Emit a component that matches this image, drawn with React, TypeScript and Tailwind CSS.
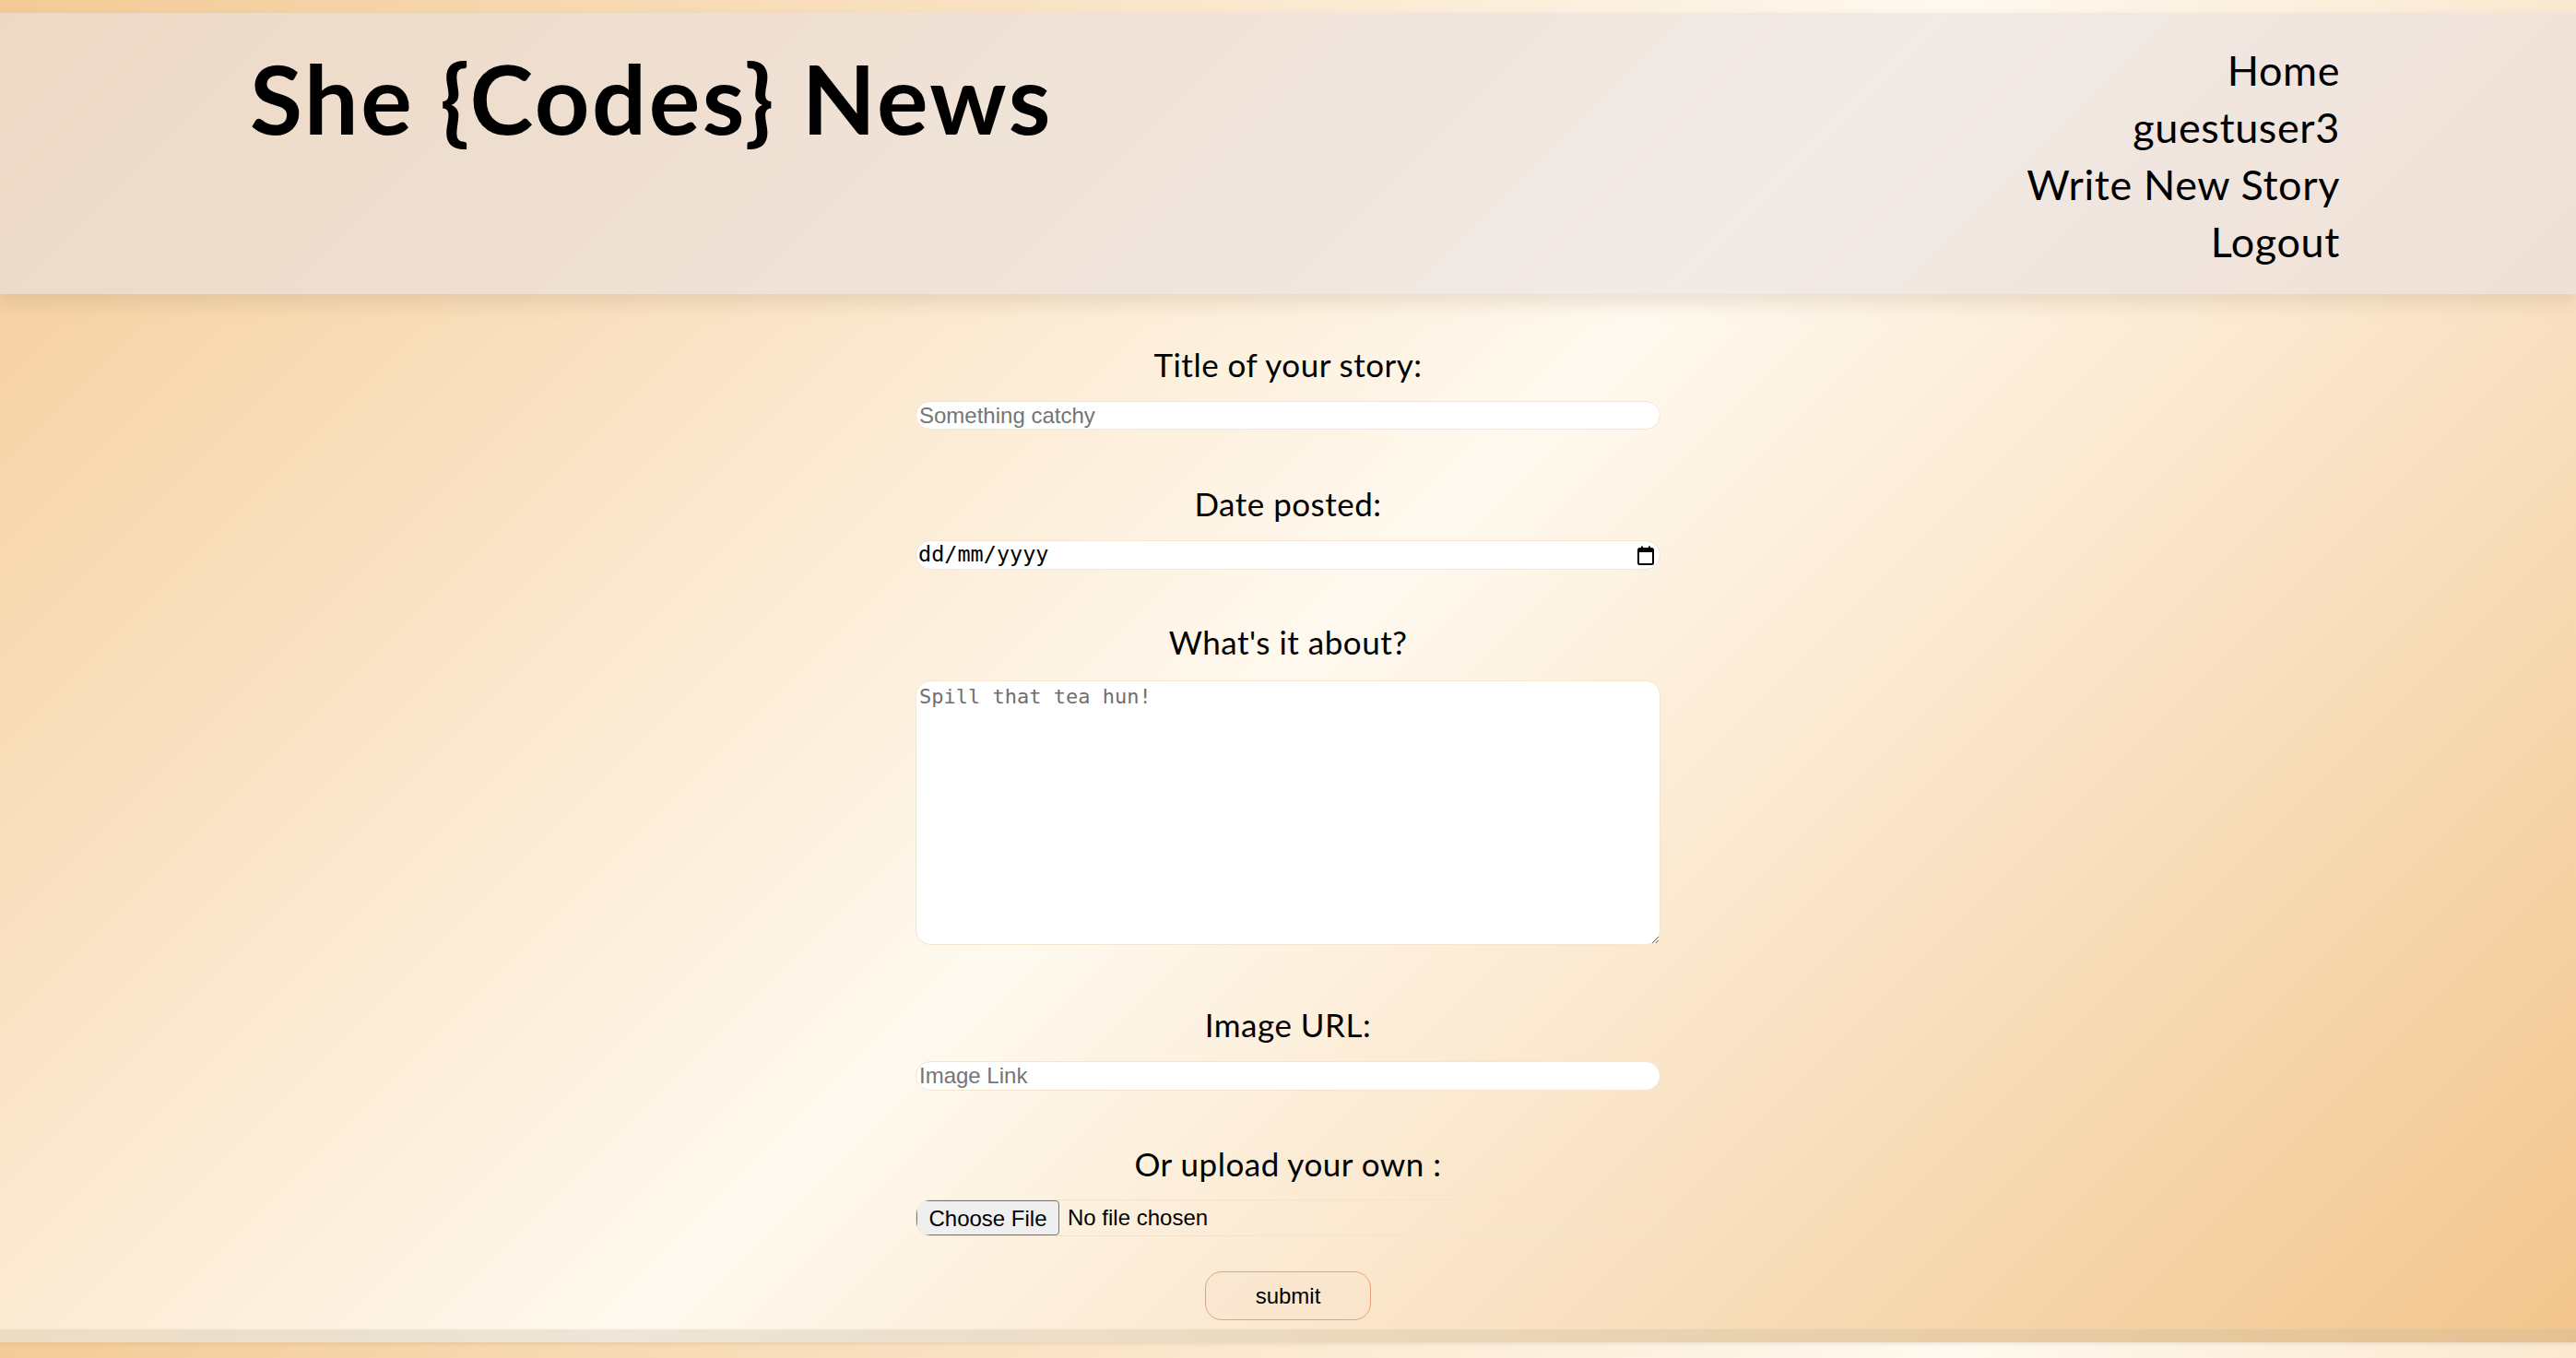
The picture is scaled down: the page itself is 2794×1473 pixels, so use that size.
import { useState } from 'react';

const raleway = { fontFamily: 'Lato, "Open Sans", sans-serif' };

function CalendarIcon() {
  return (
    <svg width="18" height="21" viewBox="0 0 18 21" aria-hidden="true">
      <rect x="1" y="3" width="16" height="17" rx="1.5" fill="none" stroke="#000" strokeWidth="2" />
      <rect x="1" y="3" width="16" height="4" fill="#000" />
      <rect x="4" y="0.5" width="2" height="4" fill="#000" />
      <rect x="12" y="0.5" width="2" height="4" fill="#000" />
    </svg>
  );
}

function FieldLabel({ children, htmlFor, className = '' }: { children: React.ReactNode; htmlFor: string; className?: string }) {
  return (
    <label
      htmlFor={htmlFor}
      className={`block text-center text-[35px] leading-[42px] tracking-[0.5px] text-black font-[Lato,sans-serif] ${className}`}
    >
      {children}
    </label>
  );
}

export default function App() {
  const [title, setTitle] = useState('');
  const [content, setContent] = useState('');
  const [image, setImage] = useState('');
  const [fileName, setFileName] = useState('');

  return (
    <div className="min-h-[1473px] overflow-hidden bg-[linear-gradient(135deg,#f4cb96_0%,#fff9ef_50%,#f2c58c_100%)] bg-[length:100%_1456px] bg-repeat-y pt-[14px]">
      <header
        style={raleway}
        className="flex h-[305px] items-start justify-between bg-[rgba(232,224,224,0.62)] pl-[271px] pr-[256px] shadow-[0_10px_18px_rgba(150,120,90,0.18)]"
      >
        <h1 className="mt-[40px] text-[104px] font-bold leading-none tracking-[2.6px] text-black">She {'{Codes}'} News</h1>
        <nav className="flex flex-col items-end pt-[31px] text-[45px] leading-[62px] tracking-[0.6px] text-black">
          <a href="#">Home</a>
          <a href="#">guestuser3</a>
          <a href="#">Write New Story</a>
          <a href="#">Logout</a>
        </nav>
      </header>

      <form className="flex flex-col items-center pt-[55px]" onSubmit={(e) => e.preventDefault()}>
        <FieldLabel htmlFor="title">Title of your story:</FieldLabel>
        <input
          id="title"
          value={title}
          onChange={(e) => setTitle(e.target.value)}
          placeholder="Something catchy"
          className="mt-[19px] h-[31px] w-[808px] rounded-[16px] border border-[#f6e4cf] bg-white px-[3px] font-['Liberation_Sans',Arial,sans-serif] text-[24px] text-black placeholder:text-[#757575] outline-none"
        />

        <FieldLabel htmlFor="date" className="mt-[59px]">Date posted:</FieldLabel>
        <div
          id="date"
          className="mt-[19px] flex h-[32px] w-[808px] items-center justify-between rounded-[16px] border border-[#f6e4cf] bg-white pl-[2px] pr-[6px]"
        >
          <span className="font-['DejaVu_Sans_Mono',monospace] text-[23.5px] leading-none text-black">dd/mm/yyyy</span>
          <CalendarIcon />
        </div>

        <FieldLabel htmlFor="content" className="mt-[57px]">What's it about?</FieldLabel>
        <textarea
          id="content"
          value={content}
          onChange={(e) => setContent(e.target.value)}
          placeholder="Spill that tea hun!"
          className="mt-[21px] h-[287px] w-[808px] rounded-[16px] border border-[#f6e4cf] bg-white px-[3px] py-[3px] font-['DejaVu_Sans_Mono',monospace] text-[22px] leading-[28px] text-black placeholder:text-[#6f6f6f] outline-none"
        />

        <FieldLabel htmlFor="image" className="mt-[65px]">Image URL:</FieldLabel>
        <input
          id="image"
          value={image}
          onChange={(e) => setImage(e.target.value)}
          placeholder="Image Link"
          className="mt-[19px] h-[32px] w-[808px] rounded-[16px] border border-[#f6e4cf] bg-white px-[3px] font-['Liberation_Sans',Arial,sans-serif] text-[24px] text-black placeholder:text-[#757575] outline-none"
        />

        <FieldLabel htmlFor="upload" className="mt-[58px]">Or upload your own :</FieldLabel>
        <label
          htmlFor="upload"
          className="mt-[18px] flex h-[40px] w-[808px] items-center overflow-hidden rounded-[16px] border border-[#f3e2cc] font-['Liberation_Sans',Arial,sans-serif] text-[24px] text-black"
        >
          <span className="flex h-[38px] w-[155px] items-center justify-center rounded-[4px] border border-[#767676] bg-[#efefef] pt-[1px]">
            Choose File
          </span>
          <span className="ml-[9px]">{fileName || 'No file chosen'}</span>
          <input
            id="upload"
            type="file"
            className="hidden"
            onChange={(e) => setFileName(e.target.files?.[0]?.name ?? '')}
          />
        </label>

        <button
          type="submit"
          className="mt-[38px] h-[53px] w-[180px] rounded-[18px] border border-[#eba07a] bg-[rgba(250,228,205,0.55)] font-['Liberation_Sans',Arial,sans-serif] text-[24px] text-black"
        >
          submit
        </button>
      </form>

      <footer className="mt-[10px] h-[14px] bg-[rgba(200,185,160,0.3)] shadow-[0_2px_4px_rgba(150,130,100,0.15)]" />
    </div>
  );
}
